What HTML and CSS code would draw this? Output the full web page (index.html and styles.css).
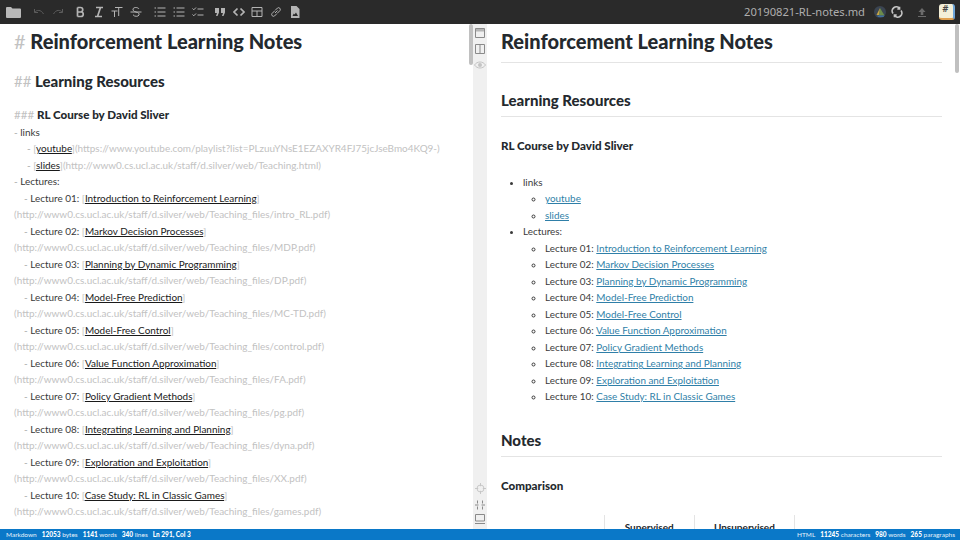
FILE: index.html
```html
<!DOCTYPE html>
<html lang="en">
<head>
<meta charset="utf-8">
<title>20190821-RL-notes.md</title>
<link rel="stylesheet" href="styles.css">
</head>
<body>
<div class="app">
  <header class="toolbar">
    <svg class="folder" viewBox="0 0 15 11"><path d="M0 1a1 1 0 0 1 1-1h4l1.500 1.500H14a1 1 0 0 1 1 1V10a1 1 0 0 1-1 1H1a1 1 0 0 1-1-1z"/></svg>
    <div class="group history">
      <svg class="ico dim" viewBox="0 0 12 12"><path d="M1.500 3v3.500H5M1.800 6.200C3.500 3.800 8 3.300 10.500 8"/></svg>
      <svg class="ico dim" viewBox="0 0 12 12"><path d="M10.500 3v3.500H7M10.200 6.200C8.500 3.800 4 3.300 1.500 8"/></svg>
    </div>
    <div class="group format">
      <svg class="ico" viewBox="0 0 12 12"><path class="thick" d="M3.500 1.500v9M3.500 1.500h3a2.200 2.200 0 0 1 0 4.500h-3M3.500 6h3.500a2.250 2.250 0 0 1 0 4.500H3.500"/></svg>
      <svg class="ico" viewBox="0 0 12 12"><path class="thick" d="M3 1.500h7M2 10.500h7M7.500 1.500l-3 9"/></svg>
      <svg class="ico" viewBox="0 0 12 12"><path d="M.5 5h6M3.500 5v6M4 1.500h7.500M7.700 1.500V10"/></svg>
      <svg class="ico" viewBox="0 0 12 12"><path d="M.5 6h11M9 3C8 1 3.500 1 3 3c-.3 1.500 1 2.500 3 3 2.500.6 3.500 1.500 3 3-.5 1.800-5 1.800-6-.3"/></svg>
    </div>
    <div class="group lists">
      <svg class="ico" viewBox="0 0 12 12"><path d="M3.500 2h8M3.500 6h8M3.500 10h8M.5 2h1.500M.5 6h1.500M.5 10h1.500"/></svg>
      <svg class="ico" viewBox="0 0 12 12"><path d="M3.500 2h8M3.500 6h8M3.500 10h8M.5 2h1.500M.5 6h1.500M.5 10h1.500"/></svg>
      <svg class="ico" viewBox="0 0 12 12"><path d="M5.500 3h6M5.500 9h6M.5 2.500l1.300 1.300L4 1.500M.5 8.500l1.300 1.300L4 7.500"/></svg>
    </div>
    <div class="group insert">
      <svg class="ico" viewBox="0 0 12 12"><path class="solid" d="M1 2h4v4.500L3.500 10H2l1-3H1zM7 2h4v4.500L9.500 10H8l1-3H7z"/></svg>
      <svg class="ico" viewBox="0 0 12 12"><path class="thick" d="M4.500 2.500 1 6l3.500 3.500M7.500 2.500 11 6 7.500 9.500"/></svg>
      <svg class="ico" viewBox="0 0 12 12"><path d="M1 1.500h10v9H1zM1 5h10M6 5v5.500" /></svg>
      <svg class="ico" viewBox="0 0 12 12"><path d="M5 7l2.500-2.500M4.500 5 2 7.500a1.800 1.800 0 0 0 2.500 2.500L7 7.500M5 4.500 7.500 2A1.800 1.800 0 0 1 10 4.500L7.500 7"/></svg>
      <svg class="ico" viewBox="0 0 12 12"><path class="solid" d="M2 0h5.500L10.500 3v9H2zM3.500 10h5.500L7 6.500 5.500 8.500 4.800 7.500zM3.500 3h2v2h-2z"/></svg>
    </div>
    <div class="title">20190821-RL-notes.md</div>
    <svg class="drive" viewBox="0 0 12 12"><circle cx="6" cy="6" r="6" fill="#3b4552"/><path d="M6 2 10.500 9.500H5z" fill="#6d8c4a"/><path d="M6 2 2.500 9H5z" fill="#c8a646"/><path d="M3 9.500h7.500L9.500 11H4z" fill="#3f6f9f"/></svg>
    <svg class="ico sync" viewBox="0 0 12 12"><path class="thick" d="M2 7.500A4 4 0 0 1 8.500 2.500M10 4.500A4 4 0 0 1 3.500 9.500M8.500.8v2.200H6.300M3.500 11.200V9h2.200"/></svg>
    <svg class="ico upload" viewBox="0 0 12 12"><path class="solid" d="M6 2l3.500 4H7.300v3H4.700V6H2.500zM2 10h8v1H2z"/></svg>
    <div class="logo"><span>#</span></div>
  </header>

  <main class="panes">
    <section class="editor">
      <h1 class="ed-h1"><span class="mark">#</span> Reinforcement Learning Notes</h1>
      <h2 class="ed-h2"><span class="mark">##</span> Learning Resources</h2>
      <h3 class="ed-h3"><span class="mark">###</span> RL Course by David Sliver</h3>
      <p class="ed-line"><span class="dash">-</span> links</p>
      <p class="ed-line"><span class="ind-b"></span><span class="dash">-</span> <span class="mark">[</span><u>youtube</u><span class="mark">](https://www.youtube.com/playlist?list=PLzuuYNsE1EZAXYR4FJ75jcJseBmo4KQ9-)</span></p>
      <p class="ed-line"><span class="ind-b"></span><span class="dash">-</span> <span class="mark">[</span><u>slides</u><span class="mark">](http://www0.cs.ucl.ac.uk/staff/d.silver/web/Teaching.html)</span></p>
      <p class="ed-line"><span class="dash">-</span> Lectures:</p>
      <p class="ed-line"><span class="ind-a"></span><span class="dash">-</span> Lecture 01: <span class="mark">[</span><u>Introduction to Reinforcement Learning</u><span class="mark">]<br>(http://www0.cs.ucl.ac.uk/staff/d.silver/web/Teaching_files/intro_RL.pdf)</span></p>
      <p class="ed-line"><span class="ind-a"></span><span class="dash">-</span> Lecture 02: <span class="mark">[</span><u>Markov Decision Processes</u><span class="mark">]<br>(http://www0.cs.ucl.ac.uk/staff/d.silver/web/Teaching_files/MDP.pdf)</span></p>
      <p class="ed-line"><span class="ind-a"></span><span class="dash">-</span> Lecture 03: <span class="mark">[</span><u>Planning by Dynamic Programming</u><span class="mark">]<br>(http://www0.cs.ucl.ac.uk/staff/d.silver/web/Teaching_files/DP.pdf)</span></p>
      <p class="ed-line"><span class="ind-a"></span><span class="dash">-</span> Lecture 04: <span class="mark">[</span><u>Model-Free Prediction</u><span class="mark">]<br>(http://www0.cs.ucl.ac.uk/staff/d.silver/web/Teaching_files/MC-TD.pdf)</span></p>
      <p class="ed-line"><span class="ind-a"></span><span class="dash">-</span> Lecture 05: <span class="mark">[</span><u>Model-Free Control</u><span class="mark">]<br>(http://www0.cs.ucl.ac.uk/staff/d.silver/web/Teaching_files/control.pdf)</span></p>
      <p class="ed-line"><span class="ind-a"></span><span class="dash">-</span> Lecture 06: <span class="mark">[</span><u>Value Function Approximation</u><span class="mark">]<br>(http://www0.cs.ucl.ac.uk/staff/d.silver/web/Teaching_files/FA.pdf)</span></p>
      <p class="ed-line"><span class="ind-a"></span><span class="dash">-</span> Lecture 07: <span class="mark">[</span><u>Policy Gradient Methods</u><span class="mark">]<br>(http://www0.cs.ucl.ac.uk/staff/d.silver/web/Teaching_files/pg.pdf)</span></p>
      <p class="ed-line"><span class="ind-a"></span><span class="dash">-</span> Lecture 08: <span class="mark">[</span><u>Integrating Learning and Planning</u><span class="mark">]<br>(http://www0.cs.ucl.ac.uk/staff/d.silver/web/Teaching_files/dyna.pdf)</span></p>
      <p class="ed-line"><span class="ind-a"></span><span class="dash">-</span> Lecture 09: <span class="mark">[</span><u>Exploration and Exploitation</u><span class="mark">]<br>(http://www0.cs.ucl.ac.uk/staff/d.silver/web/Teaching_files/XX.pdf)</span></p>
      <p class="ed-line"><span class="ind-a"></span><span class="dash">-</span> Lecture 10: <span class="mark">[</span><u>Case Study: RL in Classic Games</u><span class="mark">]<br>(http://www0.cs.ucl.ac.uk/staff/d.silver/web/Teaching_files/games.pdf)</span></p>
      <div class="scrollbar"></div>
    </section>

    <aside class="rail">
      <div class="rail-group">
        <svg class="rail-ico" viewBox="0 0 10 10"><path class="band" d="M.5 .5h9v3h-9z"/><path d="M.5 .5h9v9h-9z"/></svg>
        <svg class="rail-ico" viewBox="0 0 10 10"><path d="M.5 .5h9v9h-9zM5 .5v9"/></svg>
        <svg class="rail-ico faint wide" viewBox="0 0 12 10"><path d="M.5 5C3 1 9 1 11.500 5 9 9 3 9 .5 5z"/><circle class="pupil" cx="6" cy="5" r="2"/></svg>
      </div>
      <div class="rail-group bottom">
        <svg class="rail-ico faint target" viewBox="0 0 12 12"><circle cx="6" cy="6" r="3.800"/><path d="M6 0v3.500M6 8.500V12M0 6h3.500M8.500 6H12"/></svg>
        <svg class="rail-ico" viewBox="0 0 10 10"><path d="M0 5h3.500M6.500 5H10M2.500 .5v3M7.500 .5v3M2.500 6.500v3M7.500 6.500v3"/></svg>
        <svg class="rail-ico monitor" viewBox="0 0 10 10"><path d="M.5 .5h9v6.500h-9zM0 9.500h10"/></svg>
      </div>
    </aside>

    <section class="preview">
      <h1>Reinforcement Learning Notes</h1>
      <h2>Learning Resources</h2>
      <h3>RL Course by David Sliver</h3>
      <ul class="top">
        <li>links
          <ul>
            <li><a href="#">youtube</a></li>
            <li><a href="#">slides</a></li>
          </ul>
        </li>
        <li>Lectures:
          <ul>
            <li>Lecture 01: <a href="#">Introduction to Reinforcement Learning</a></li>
            <li>Lecture 02: <a href="#">Markov Decision Processes</a></li>
            <li>Lecture 03: <a href="#">Planning by Dynamic Programming</a></li>
            <li>Lecture 04: <a href="#">Model-Free Prediction</a></li>
            <li>Lecture 05: <a href="#">Model-Free Control</a></li>
            <li>Lecture 06: <a href="#">Value Function Approximation</a></li>
            <li>Lecture 07: <a href="#">Policy Gradient Methods</a></li>
            <li>Lecture 08: <a href="#">Integrating Learning and Planning</a></li>
            <li>Lecture 09: <a href="#">Exploration and Exploitation</a></li>
            <li>Lecture 10: <a href="#">Case Study: RL in Classic Games</a></li>
          </ul>
        </li>
      </ul>
      <h2 class="notes">Notes</h2>
      <h3 class="comparison">Comparison</h3>
      <table>
        <tr><th class="c0"></th><th class="c1">Supervised</th><th class="c2">Unsupervised</th><th class="c3"></th></tr>
      </table>
      <div class="scrollbar"></div>
    </section>
  </main>

  <footer class="status">
    <div class="stat-group">
      <span>Markdown</span>
      <span><b>12053</b> bytes</span>
      <span><b>1141</b> words</span>
      <span><b>340</b> lines</span>
      <span><b>Ln 291, Col 3</b></span>
    </div>
    <div class="stat-group">
      <span>HTML</span>
      <span><b>11245</b> characters</span>
      <span><b>980</b> words</span>
      <span><b>265</b> paragraphs</span>
    </div>
  </footer>
</div>
</body>
</html>
```
FILE: styles.css
```css
* { box-sizing: border-box; }
html, body { margin: 0; height: 100%; overflow: hidden; }
body { font-family: Lato, "Noto Sans", sans-serif; color: #24292e; background: #fff; }
.app { width: 960px; height: 540px; display: flex; flex-direction: column; overflow: hidden; }

/* toolbar */
.toolbar { flex: 0 0 24px; height: 24px; background: #2a2a2a; display: flex; align-items: center; padding: 0 5px 0 6px; }
.folder { width: 15px; height: 11px; fill: #b9b9b9; flex: none; }
.group { display: flex; gap: 7px; flex: none; }
.ico { width: 12px; height: 12px; flex: none; fill: none; stroke: #b4b4b4; stroke-width: 1; }
.ico .thick { stroke-width: 1.7; }
.ico .solid { fill: #b4b4b4; stroke: none; }
.ico.dim { stroke: #5c5c5c; }
.history { margin-left: 12px; }
.format { margin-left: 10px; gap: 6.700px; }
.lists { margin-left: 11.500px; }
.insert { margin-left: 10.500px; gap: 6.700px; }
.title { margin-left: auto; font: 11.200px "Noto Sans", sans-serif; color: #aeaeae; line-height: 24px; }
.drive { width: 12px; height: 12px; margin-left: 9px; flex: none; }
.sync { margin-left: 5px; stroke: #c4c4c4; }
.upload { margin-left: 13px; }
.upload .solid { fill: #6b6b6b; }
.logo { margin-left: 11px; width: 16px; height: 16px; flex: none; background: #f3efd8; border-radius: 3px; border-right: 2px solid #6ea5d8; border-bottom: 2px solid #e0a050; font: bold 8px/12px "DejaVu Sans", sans-serif; color: #444; padding-left: 3px; }

/* panes */
.panes { flex: 1 1 auto; min-height: 0; display: flex; }
.editor { position: relative; flex: 0 0 473px; overflow: hidden; padding-left: 14px; font-size: 9.950px; line-height: 16.500px; color: #3a3a3a; }
.ed-h1 { margin: 4px 0 0; font-size: 20px; line-height: 26px; font-weight: 900; color: #24292e; }
.ed-h2 { margin: 15px 0 0; font-size: 15px; line-height: 24px; font-weight: 900; color: #24292e; }
.ed-h3 { margin: 13px 0 -0.500px; font-size: 11.600px; line-height: 18px; font-weight: 900; color: #24292e; }
.mark { color: #c2c2c2; font-weight: 400; }
.dash { color: #a8a8a8; }
.ind-a { display: inline-block; width: 10px; }
.ind-b { display: inline-block; width: 13px; }
.ed-line { margin: 0; white-space: nowrap; }
.ed-line u { color: #1a1a1a; }
.scrollbar { position: absolute; top: 0; right: 0; width: 4px; height: 41px; background: #c0c0c0; border-radius: 2px; }

.rail { flex: 0 0 14px; background: #f0f0f0; display: flex; flex-direction: column; justify-content: space-between; align-items: center; padding: 4px 0 5px; }
.rail-group { display: flex; flex-direction: column; align-items: center; gap: 6px; }
.rail-ico { width: 10px; height: 10px; fill: none; stroke: #8a8a8a; stroke-width: 1; flex: none; }
.rail-ico.wide { width: 12px; }
.rail-ico.target { width: 11px; height: 11px; }
.rail-ico.monitor { margin-top: -2px; }
.rail-ico .band { fill: #b5b5b5; stroke: none; }
.rail-ico.faint { stroke: #c4c4c4; }
.rail-ico .pupil { fill: #c4c4c4; stroke: none; }

.preview { position: relative; flex: 1 1 auto; overflow: hidden; padding: 0 18px 0 14px; font-size: 9.900px; line-height: 16.500px; color: #3a3a3a; }
.preview .scrollbar { right: 1px; height: 49px; }
.preview h1 { margin: 4px 0 0; padding-bottom: 8px; font-size: 20px; line-height: 26px; font-weight: 900; border-bottom: 1px solid #e4e4e4; color: #24292e; }
.preview h2 { margin: 27px 0 0; padding-bottom: 6px; font-size: 15px; line-height: 20px; font-weight: 900; border-bottom: 1px solid #e4e4e4; color: #24292e; }
.preview h2.notes { margin-top: 25px; }
.preview h3 { margin: 20px 0 0; font-size: 11.600px; line-height: 18px; font-weight: 900; color: #24292e; }
.preview ul { margin: 0; padding: 0; }
.preview ul.top { margin-top: 18.500px; padding-left: 22px; list-style: disc; }
.preview ul ul { padding-left: 22px; list-style: circle; }
.preview a { color: #2f7fa8; text-decoration: underline; }
table { border-collapse: collapse; margin-top: 20px; table-layout: fixed; width: 294px; }
th { height: 24px; padding: 4px 0 0; font-size: 10px; line-height: 16.500px; font-weight: 700; text-align: center; vertical-align: top; color: #24292e; }
.c0 { width: 103px; }
.c1 { width: 90px; border-left: 1px solid #e4e4e4; }
.c2 { width: 100px; border-left: 1px solid #e4e4e4; border-right: 1px solid #e4e4e4; }
.c3 { width: 0; }

/* status */
.status { flex: 0 0 11px; height: 11px; background: #0a78c8; color: #e6f2fb; font-size: 6.500px; line-height: 11px; display: flex; justify-content: space-between; padding: 0 5px 0 6px; }
.stat-group { display: flex; gap: 5px; }
.stat-group b { font-weight: 900; color: #fff; }
```
